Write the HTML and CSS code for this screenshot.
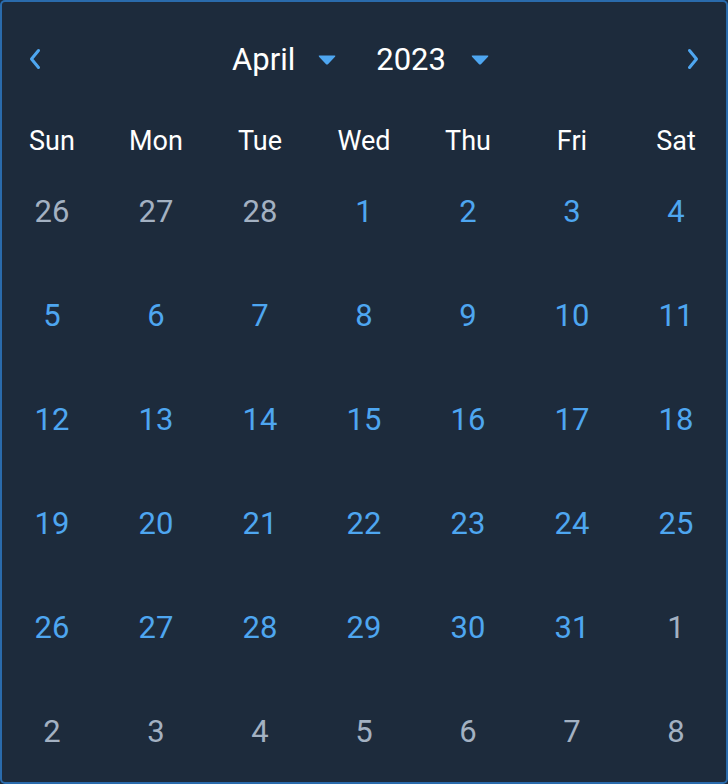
FILE: index.html
```html
<!DOCTYPE html>
<html lang="en">
<head>
  <meta charset="UTF-8">
  <meta name="viewport" content="width=device-width, initial-scale=1.0">
  <title>Calendar</title>
  <link rel="stylesheet" href="styles.css">
</head>
<body>

  <div class="calendar">
    <div class="cal-header">
      <button class="nav-btn" aria-label="Previous month">
        <svg width="14" height="22" viewBox="0 0 14 22"><path d="M10.5 2.5 L3.5 11 L10.5 19.5" fill="none" stroke="#4ea6f0" stroke-width="3" stroke-linecap="round" stroke-linejoin="round"/></svg>
      </button>

      <div class="selects">
        <div class="select month-select">
          <span>April</span>
          <svg class="caret" width="20" height="12" viewBox="0 0 20 12"><path d="M2.5 1.5 H17.5 Q19 1.5 18 2.7 L11.2 10 Q10 11.2 8.8 10 L2 2.7 Q1 1.5 2.5 1.5 Z" fill="#4ea6f0"/></svg>
        </div>
        <div class="select year-select">
          <span>2023</span>
          <svg class="caret" width="20" height="12" viewBox="0 0 20 12"><path d="M2.5 1.5 H17.5 Q19 1.5 18 2.7 L11.2 10 Q10 11.2 8.8 10 L2 2.7 Q1 1.5 2.5 1.5 Z" fill="#4ea6f0"/></svg>
        </div>
      </div>

      <button class="nav-btn" aria-label="Next month">
        <svg width="14" height="22" viewBox="0 0 14 22"><path d="M3.5 2.5 L10.5 11 L3.5 19.5" fill="none" stroke="#4ea6f0" stroke-width="3" stroke-linecap="round" stroke-linejoin="round"/></svg>
      </button>
    </div>

    <div class="weekdays">
      <div>Sun</div>
      <div>Mon</div>
      <div>Tue</div>
      <div>Wed</div>
      <div>Thu</div>
      <div>Fri</div>
      <div>Sat</div>
    </div>

    <div class="days" id="days"></div>
  </div>

  <script>
    // April 2023 grid, padded with the trailing March and leading May days
    const days = document.getElementById("days");
    const cells = [];

    [26, 27, 28].forEach(d => cells.push({ d, other: true }));
    for (let d = 1; d <= 31; d++) cells.push({ d, other: false });
    for (let d = 1; d <= 8; d++) cells.push({ d, other: true });

    cells.forEach(c => {
      const el = document.createElement("div");
      el.className = c.other ? "day other" : "day";
      el.textContent = c.d;
      days.appendChild(el);
    });
  </script>

</body>
</html>
```

FILE: styles.css
```css
body {
  margin: 0;
  background-color: #1d2b3c;
  font-family: Roboto, "Noto Sans", Arial, sans-serif;
}

.calendar {
  width: 728px;
  height: 784px;
  box-sizing: border-box;
  background-color: #1d2b3c;
  border-radius: 5px;
  box-shadow: inset 0 0 0 2px #2a6bac;
  overflow: hidden;
}

.cal-header {
  height: 118px;
  display: flex;
  align-items: center;
  justify-content: space-between;
}

.nav-btn {
  width: 70px;
  height: 60px;
  background: none;
  border: none;
  padding: 0;
  cursor: pointer;
  display: flex;
  align-items: center;
  justify-content: center;
}

.selects {
  display: flex;
  align-items: center;
  gap: 39px;
  padding-right: 6px;
}

.select {
  display: flex;
  align-items: center;
  color: #ffffff;
  font-size: 31px;
  cursor: pointer;
}

.month-select {
  gap: 22px;
}

.year-select {
  gap: 24px;
}

.caret {
  margin-top: 2px;
}

.weekdays {
  display: grid;
  grid-template-columns: repeat(7, 104px);
  padding-top: 4px;
  margin-bottom: -1px;
  line-height: 38px;
  color: #ffffff;
  font-size: 27px;
  text-align: center;
}

.days {
  display: grid;
  grid-template-columns: repeat(7, 104px);
  grid-auto-rows: 104px;
}

.day {
  display: flex;
  align-items: center;
  justify-content: center;
  font-size: 31px;
  color: #4ea6f0;
}

.day.other {
  color: #a3b1c2;
}
```
